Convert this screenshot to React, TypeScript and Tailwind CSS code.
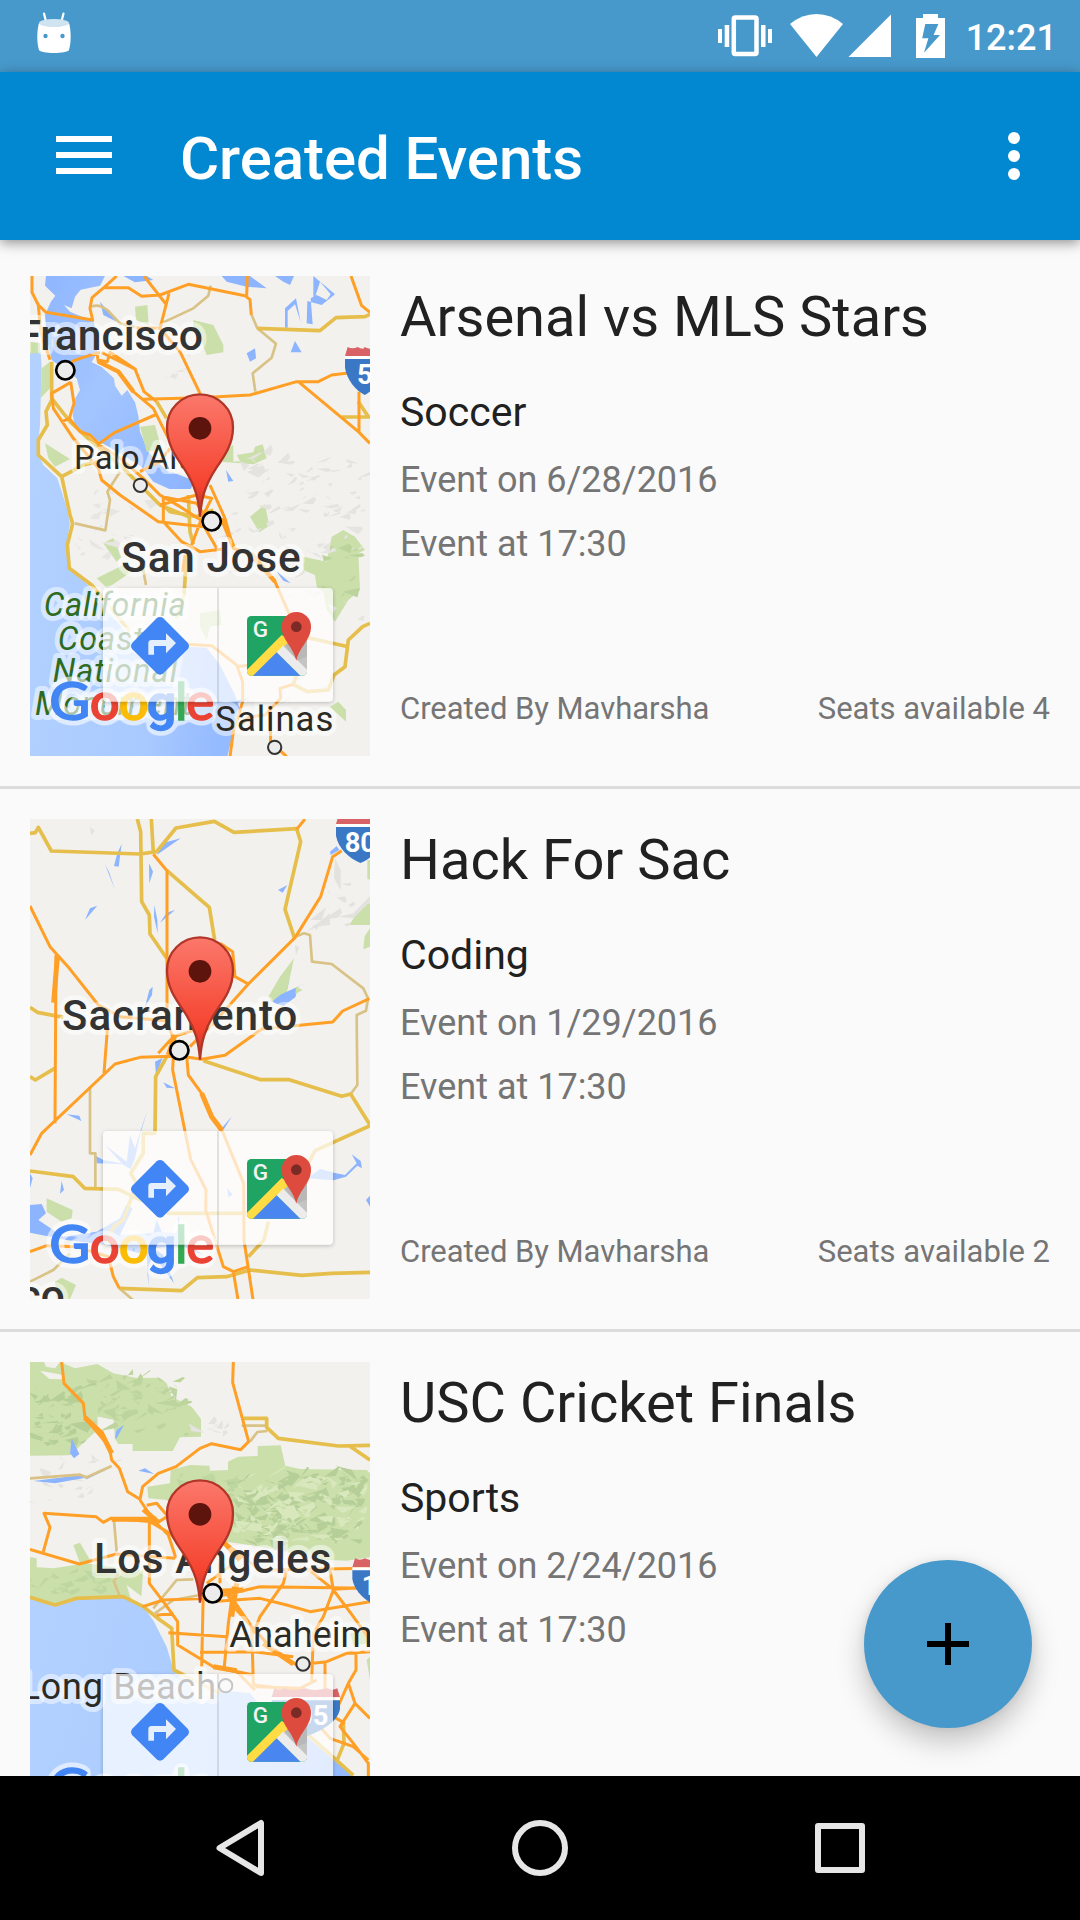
import React from "react";

const LAND = "#f2f1ed";
const WATER = "#8cb4ff";
const PARK = "#cbdfab";
const ORANGE = "#ff9f26";
const YELLOW = "#e6be4b";
const TAN = "#d8c285";

function Roads({ d, color = ORANGE, w = 9 }: { d: string; color?: string; w?: number }) {
  return <path d={d} fill="none" stroke={color} strokeWidth={w} strokeLinejoin="round" />;
}

/* Small faceted shapes of varied size that suggest terrain relief inside a box. */
function Relief({ seed, n, x, y, w, h, color, size = 26 }: { seed: number; n: number; x: number; y: number; w: number; h: number; color: string; size?: number }) {
  let s = seed * 7919;
  const rnd = () => {
    s = (s * 16807) % 2147483647;
    return s / 2147483647;
  };
  let d = "";
  for (let i = 0; i < n; i++) {
    const px = x + rnd() * w;
    const py = y + rnd() * h;
    const k = size * (0.5 + rnd() * 0.9);
    const flip = rnd() > 0.3 ? 1 : -1;
    d += `M${px.toFixed(0)} ${py.toFixed(0)}l${(flip * k * (0.5 + rnd())).toFixed(0)} ${(-k * rnd()).toFixed(0)}l${(k * 0.3 * rnd()).toFixed(0)} ${(k * 0.5 * rnd()).toFixed(0)}l${(-flip * k * 0.9 * rnd()).toFixed(0)} ${(k * 0.6 * rnd()).toFixed(0)}z`;
  }
  return <path d={d} fill={color} />;
}

function Label({ x, y, size, children, weight = 400, color = "#2b2a24", end, italic, len }: { x: number; y: number; size: number; children: string; weight?: number; color?: string; end?: boolean; italic?: boolean; len?: number }) {
  return (
    <text
      x={x}
      y={y}
      fontSize={size}
      fontWeight={weight}
      fill={color}
      stroke="#fff"
      strokeOpacity={0.5}
      strokeWidth={30}
      strokeLinejoin="round"
      paintOrder="stroke"
      textAnchor={end ? "end" : "start"}
      fontStyle={italic ? "italic" : "normal"}
      textLength={len}
    >
      {children}
    </text>
  );
}

function Town({ x, y, big }: { x: number; y: number; big?: boolean }) {
  return <circle cx={x} cy={y} r={big ? 27.5 : 20} fill="#ececec" stroke={big ? "#000" : "#333"} strokeWidth={big ? 8 : 6} />;
}

function Shield({ x, y, label, w = 150, lx }: { x: number; y: number; label: string; w?: number; lx: number }) {
  return (
    <g transform={`translate(${x} ${y})`}>
      <path d={`M8 0q14 8 30 0q18 10 ${w / 2 - 38} 0q20 10 ${w / 2 - 38} 0q16 8 30 0L${w} 27H0z`} fill="#d96266" />
      <path d={`M0 27H${w}V36H0z`} fill="#fff" />
      <path d={`M0 36H${w}V62C${w - 6} 100 ${w * 0.72} 130 ${w / 2} 144C${w * 0.28} 130 6 100 0 62z`} fill="#3a78c6" />
      <text x={lx} y={110} fontSize={82} fontWeight={700} fill="#fff">
        {label}
      </text>
    </g>
  );
}

function MapOne() {
  return (
    <>
      <path d="M30 265L62 262L65 310L60 480L52 560L70 600L112 640L138 720L150 775L140 835L145 905L210 965L262 1035L325 1110L400 1160L490 1145L560 1148L600 1200L645 1290L662 1340L640 1400L622 1475H30z" fill="url(#ocean)" />
      <path d="M78 33H255L240 62L182 74L165 95L155 130L132 120L150 140L222 170L232 262L215 292L245 306L282 340L285 362L305 392L322 375L345 412L355 452L360 500L385 560L410 590L440 615L525 648L512 672L448 672L400 650L365 605L300 565L230 525L190 505L165 485L158 450L166 400L180 376L170 340L95 285L80 220L75 150L92 112L106 92L75 62z" fill="url(#bay)" />
      <path d="M310 33H380L400 45L345 52zM605 33H690L740 70L680 65L620 50zM765 33H822L810 60L790 50zM880 33L945 88L905 120L862 108L860 175L878 178L872 100L890 90L920 105L932 88L900 50L880 112M795 188V130L828 100L842 172L825 118L803 138V188zM680 265L705 250L708 280L690 290zM825 228L845 262L812 262zM618 615L640 648L625 650zM240 110L290 170L250 150z" fill={WATER} />
      <path d="M345 125L382 120L386 180L348 165zM520 165L580 180L610 240V262L560 270L545 230L520 200zM75 535L150 582L105 605L85 580zM65 310L90 290V370L62 400zM620 552L640 540V590L660 588L650 570L700 562L705 545L728 538L740 580L700 598L660 595L600 590zM360 485L405 480L425 555L380 560zM30 230L60 235V265H30zM690 755L735 718L748 782L718 802z" fill={PARK} />
      <g transform="translate(0 735)">
        <path d="M250 100L280 84L305 140L290 155zM230 205L310 165L328 190L262 235zM850 140L920 155L935 80L970 60L1005 80L1035 120L1015 130L1020 240L985 270L945 335L920 300L910 245L890 230L885 195L850 180zM540 310L600 300L605 345L570 350L560 390L540 350zM930 590L955 575L978 600V635z" fill={PARK} />
        <path d="M768 182L812 220L790 212zM640 572L690 565L650 580z" fill={WATER} />
      </g>
      <Relief seed={77} n={55} x={650} y={560} w={370} h={200} color="#e4e3df" />
      <Relief seed={19} n={38} x={560} y={740} w={460} h={200} color="#e5e4e1" />
      <Relief seed={31} n={22} x={170} y={690} w={220} h={200} color="#e7e6e2" />
      <Relief seed={5} n={12} x={400} y={230} w={130} h={140} color="#e6e5e1" size={18} />
      <Relief seed={8} n={20} x={680} y={960} w={340} h={400} color="#e6e5e1" />
      <Relief seed={12} n={12} x={925} y={830} w={70} h={190} color="#bcd39c" />

      <Roads color={TAN} w={8} d="M215 125Q235 115 262 135L300 175L360 190M430 172L520 130L565 92L572 62M695 150L712 190L768 236L755 278L698 325L706 380M300 620L262 680L270 705L256 796L165 775M365 890L378 960" />
      <Roads color={YELLOW} w={11} d="M95 290V400L150 470L215 530L300 600L360 660L420 720L505 755M95 405L78 440L82 480L55 525V570L125 635L150 750L158 775L142 840L148 910L215 960L330 1100M125 635L190 600L230 590M410 410L440 460M712 190L900 197L948 158L1035 155L1050 148M965 456H1050M1015 410L1045 455M505 690L510 800L520 838M500 870L492 990L470 1060M1050 1075L1028 1085L985 1125L975 1205L942 1230L925 1275L862 1280L820 1258L840 1200M985 1145L850 1115M425 715L450 740L530 755L580 735" />
      <Roads
        d="M36 33V82L55 120L62 200L90 284M55 120L78 142L218 165L210 130L216 98L255 65L290 33M255 68H325L365 94L420 90L505 58L675 92L690 104L694 150M372 33L440 120M447 85L420 190L350 190M682 33L680 92M993 33L1025 122L1050 142M420 190L480 260L540 385M230 260L235 290L295 320L340 380L400 430L445 520M232 285L262 290L270 262L345 312L372 380L410 410M245 262L350 315M370 403L540 398L690 390L830 350H895L935 330L985 324M835 350L1015 500L1050 535M1017 380V500M405 450L285 502L232 540M155 290L180 280L240 262M152 350L162 415L148 460L180 500L210 510L245 545L300 580L370 640L420 690L480 725L550 770M152 352L95 385L100 430L160 520L235 610L245 645L300 690L415 770L590 790M125 470L150 460M430 700V770L485 830L540 860L610 852M425 695L530 715L560 760M420 720L530 690L575 700L545 760L515 840M570 660L615 760L640 850L700 870L765 950L800 1030L815 1060M450 550L420 590L360 620M495 870L488 920M550 780L590 850"
      />
      <Roads w={13} d="M235 290L295 320L340 380M605 760L640 845M690 865L765 950" />
      <Roads w={9} d="M500 1138L575 1142L650 1200L668 1250V1310L640 1400L630 1475M650 1205L690 1200M820 1258L780 1270L782 1300L735 1350L690 1355L655 1385M750 1330L752 1430L800 1475" />

      <Label x={549} y={255} size={128} weight={500} color="#333" end>San Francisco</Label>
      <Label x={162} y={613} size={99} len={398}>Palo Alto</Label>
      <Label x={304} y={920} size={127} weight={500} color="#333" len={538}>San Jose</Label>
      <Label x={71} y={1053} size={98} color="#2e6b1e" italic len={426}>California</Label>
      <Label x={113} y={1154} size={98} color="#2e6b1e" italic len={338}>Coastal</Label>
      <Label x={98} y={1252} size={98} color="#2e6b1e" italic len={374}>National</Label>
      <Label x={45} y={1351} size={98} color="#2e6b1e" italic len={470}>Monument</Label>
      <Label x={586} y={1398} size={104} len={354}>Salinas</Label>
      <Town x={136} y={316} big />
      <Town x={361} y={661} />
      <Town x={575} y={769} big />
      <Town x={764} y={1447} />
      <Shield x={975} y={246} label="5" w={118} lx={36} />
    </>
  );
}

function MapTwo() {
  return (
    <>
      <path d="M282 168L292 130L305 102L296 170zM255 162L268 188L285 240zM387 160L399 185L388 220zM410 135L432 98L482 85zM195 330L210 295L232 287zM403 285L412 330L413 370L402 320zM420 338L440 308L465 300zM375 590L388 540L398 530L396 555zM774 240L802 225L788 248zM930 125L950 108L958 120L932 135zM750 570L780 555L800 500L808 510L800 545L830 532L872 516L835 530L826 562L790 588L762 578z" fill={WATER} />
      <path d="M745 560L780 500L822 445L808 510L800 545L780 555L755 575zM828 530L848 540L826 552zM988 345L1030 280H1050V345zM1030 418L1034 378L1050 355V410zM1042 150H1050V208H1042z" fill={PARK} />
      <g transform="translate(0 735)">
        <path d="M30 450L65 447L78 475L55 495L130 545L230 530L300 490L318 450L338 460L300 540L400 535L410 495L425 530L470 535L475 480L490 560L550 600L480 570L400 580L430 600L462 685L400 600L385 635V695L380 600L260 570L140 555L30 533zM255 270L320 320L330 240L345 280L382 165L360 240L345 310L332 342L310 330zM405 20L428 8L408 60zM430 82L465 100L440 98zM140 178L178 182L184 198zM605 220L636 184L610 225zM125 378L132 405L120 416zM30 355L38 370L30 400zM228 303L250 315L320 328L230 325zM622 400L638 420L625 425zM862 370L900 342L948 355L975 360L1010 325L995 298L1022 318L1026 340L1012 332L978 365L940 376zM1038 435L1050 422V455z" fill={WATER} />
        <path d="M80 430L158 465L155 490L125 500L80 470zM105 680L125 668L168 690L150 732H110z" fill={PARK} />
      </g>
      <path d="M870 330L918 292L905 330zM955 320L1000 310L1050 258V275L1000 325zM945 145L962 180V240L942 205zM860 365L930 310V345L890 350zM210 50L224 62L214 76zM825 405L838 412L828 435z" fill="#e3e2de" />
      <Relief seed={91} n={8} x={870} y={220} w={160} h={130} color="#e3e2de" />
      <Roads color={TAN} w={8} d="M825 380L852 370L870 375L876 455L935 462L1030 535L1044 565L1038 602L1010 615L1012 825L992 852M210 830V1030H226V1135M30 1415L100 1380L150 1330M298 1435L345 1475" />
      <Roads color={YELLOW} w={11} d="M30 70L46 68L55 52L94 123L360 132L410 125L468 54L583 34L642 67L830 56L842 95L795 298L823 383M352 27L362 65L365 275L388 315L390 372L440 445M394 27L400 128M441 182L568 292L584 390M30 592L52 607L130 622M30 800L46 810L104 775M440 740L407 800L405 970H370V1030L332 1090L350 1120L310 1230L280 1250L262 1300M550 752L722 809H808L965 859L992 852L1050 945M1050 947L885 1022L865 1060M30 1083L160 1100L194 1135L295 1138L365 1172M440 1210H680M745 1235L732 1290L685 1340M298 1435L485 1442L532 1403L620 1400L690 1380L845 1396L935 1390L1050 1387" />
      <Roads d="M855 27L830 58M30 288L90 410L148 475L235 585L300 620L435 632M108 435L105 940M400 133L441 182V630L458 680M600 400L638 425L645 500L685 522L825 383L902 260L938 140L965 122M685 522L580 640L510 710M1048 566L968 603L938 636L725 657L615 736L545 748L480 738L360 742L285 762L65 970L30 1035M262 660L252 790M415 730L460 680L560 650M460 740L458 780L512 1048L558 1140L557 1200L610 1370L640 1385L655 1475M500 738L505 795L545 850L575 920L610 970L671 1120L672 1290L700 1475M640 1385L685 1370M30 1325L80 1307L165 1310L265 1340L280 1400L298 1435" />
      <Roads w={15} d="M112 440L101 578M545 850L575 920L605 960M445 735L465 675" />
      <Label x={126} y={660} size={127} weight={500} color="#333" len={706}>Sacramento</Label>
      <Label x={134} y={1500} size={127} weight={500} color="#333" end>San Francisco</Label>
      <Town x={478} y={721} big />
      <Shield x={948} y={15} label="80" w={146} lx={26} />
    </>
  );
}

function MapThree() {
  return (
    <>
      <path d="M30 36H72L78 50L105 55L120 36L165 55L232 42L280 70L350 84L418 83L440 100L455 140L515 170L543 207V260L480 262L458 303H338V282H295L282 262L280 210L235 200L232 240L150 316L30 317z" fill={PARK} />
      <path d="M60 62L130 75V88L88 87zM232 200L280 210L285 262L265 280L235 240z" fill={LAND} />
      <path d="M382 410L450 400L452 360L510 345L568 347L570 362L624 360V335L655 320L713 318V288L782 286L796 347L840 357L1040 360L1050 370V622L980 632L880 628L780 600L720 590L620 575L500 500L440 450L385 445zM160 585L180 578L210 630L180 640zM30 622L50 625V660H30z" fill={PARK} />
      <path d="M30 650L100 655L200 640L300 655L370 660L362 765L310 750L170 742L120 775L30 745z" fill={PARK} />
      <Relief seed={44} n={50} x={35} y={110} w={140} h={170} color="#b6cf96" size={30} />
      <Relief seed={62} n={52} x={210} y={90} w={290} h={160} color="#bdd59d" size={32} />
      <Relief seed={23} n={110} x={660} y={380} w={360} h={200} color="#b6cf98" size={42} />
      <Relief seed={64} n={70} x={650} y={380} w={370} h={200} color="#d8e8bc" size={34} />
      <Relief seed={12} n={25} x={470} y={375} w={170} h={80} color="#bed69f" />
      <Relief seed={81} n={20} x={40} y={670} w={270} h={60} color="#bed69f" size={34} />
      <Relief seed={4} n={18} x={45} y={330} w={240} h={140} color="#e4e3df" />
      <Relief seed={3} n={8} x={540} y={220} w={80} h={30} color="#e4e3df" />
      <path d="M155 265L178 312L162 325L150 310zM285 260L290 240L312 224L288 268zM355 362L375 355L402 372zM40 393L180 376L200 388L278 350L205 382L105 400z" fill={WATER} />
      <path d="M30 742L105 770L170 745L305 742L372 772L402 815L440 890L462 965L500 990L545 1065L600 1020L690 1030L760 1110L860 1160L1000 1280V1476H30z" fill="url(#ocean)" />
      <path d="M320 705L372 745V768L335 755z" fill={LAND} />
      <path d="M990 850L1050 840V880L1000 885zM1040 930L1050 920V990z" fill={PARK} />
      <Roads color={TAN} w={8} d="M30 385L180 374L200 382L275 348M282 512L290 605M690 275L712 246L742 243M665 227H740M400 775L470 690L520 688M405 790L460 750L540 735M280 690L300 740M300 660L285 690" />
      <Roads color={YELLOW} w={11} d="M672 205H740V232L775 265L955 288L1050 286M992 290L1050 330M30 742L105 765L170 745L310 740L370 770L420 810L455 835L462 960L540 1000L600 1030M860 1150L1000 1276M970 1120L972 1180L950 1235" />
      <Roads d="M125 36L132 100L190 160L195 203L268 290L275 330L298 355L323 425L360 448L368 410L415 370L468 350L540 295L575 281L662 299L686 275L638 98L640 36M360 450L400 510L445 555L468 625M380 466L410 460L440 495M70 605L90 532L72 490L228 500L250 517L272 505L415 517L440 500M30 598L178 642L290 612L465 625M388 515V700L430 755L473 815V885L580 950L700 975M390 515L450 550L530 640M368 770L430 750L570 745L720 710L1050 715M410 796L460 790M445 848L620 860M550 720L545 950M610 575L720 660L1050 655M600 640V700M560 700L640 640M640 710L625 820L612 960M570 755L720 745L800 765L870 785L1050 755M640 750L695 830L700 1000L710 1010L840 1015L890 990M800 660L790 700L720 800L700 850M930 660L940 720L910 800L880 850L875 995M940 720L1000 800L1050 870M620 730L650 780L750 890L830 945L920 935L980 910L1050 905M540 907L700 905L820 920M915 935V1030L700 1005M1008 910V960L985 1000L940 1100L975 1120M985 1000L1005 1060L1050 1105M1005 1060L960 1130L1000 1180L1045 1240V1280M900 1130L930 1165L1000 1190L1045 1230M580 950L650 965L705 1020M860 655L940 718L1050 712" />
      <Roads w={15} d="M195 203L245 250L275 310M275 508H410M370 478L415 517M610 575L660 630M580 950L650 962M730 880L820 942M570 725L670 720M650 700L635 800" />
      <Label x={222} y={668} size={127} weight={500} color="#333" len={712}>Los Angeles</Label>
      <g transform="translate(0 645)">
        <Label x={628} y={247} size={110} len={430}>Anaheim</Label>
        <Label x={2} y={402} size={108} len={586}>Long Beach</Label>
        <Town x={578} y={85} big />
        <Town x={849} y={297} />
        <Town x={617} y={362} />
        <Shield x={997} y={-20} label="10" w={150} lx={28} />
        <Shield x={755} y={370} label="405" w={205} lx={29} />
      </g>
    </>
  );
}

const wordmark: [string, number, number, string][] = [
  ["G", 58, 123, "#4285f4"],
  ["o", 179, 90, "#ea4335"],
  ["o", 266, 90, "#fbbc05"],
  ["g", 351, 88, "#4285f4"],
  ["l", 436, 36, "#34a853"],
  ["e", 469, 84, "#ea4335"],
];

/* Wordmark, toolbar and pin shared by every map. */
function MapOverlay() {
  return (
    <>
      <g fontFamily="Lato, Roboto, sans-serif" fontSize={154} fontWeight={500} filter="url(#halo)">
        {wordmark.map(([c, x, w, color], i) => (
          <text
            key={i}
            x={x}
            y={1333}
            textLength={w}
            lengthAdjust="spacingAndGlyphs"
            fontFamily={c === "g" ? "Roboto, sans-serif" : undefined}
            fontSize={c === "g" ? 146 : undefined}
            fill={color}
            stroke={color}
            strokeWidth={4}
          >
            {c}
          </text>
        ))}
      </g>
      <g transform="translate(-30 702)">
        <rect x="249" y="238" width="690" height="341" rx="12" fill="#000" opacity="0.22" filter="url(#soft)" clipPath="url(#outside)" />
        <rect x="249" y="234" width="690" height="341" rx="12" fill="#fff" fillOpacity="0.72" />
        <rect x="591" y="234" width="6" height="341" fill="#000" fillOpacity="0.1" />
        <path d="M410 325Q420 317 430 325L503 398Q511 408 503 418L430 490Q420 498 410 490L337 418Q329 408 337 398z" fill="#4285f4" />
        <path d="M385 434V400Q385 390 395 390H438V370L468 399L438 430V408H402V434z" fill="#fff" fillOpacity="0.87" />
        <clipPath id="tile">
          <rect x="681" y="318" width="180" height="179" rx="13" />
        </clipPath>
        <g clipPath="url(#tile)">
          <rect x="681" y="318" width="180" height="180" fill="#1fa463" />
          <path d="M861 318L770 409L861 498z" fill="#c4c4c4" />
          <path d="M861 330V440L830 452L790 400z" fill="#b8b8b8" />
          <path d="M681 479L785 375L812 390L770 430L700 500H681z" fill="#ffdc43" />
          <path d="M770 427L842 498H698z" fill="#4a86f0" />
          <path d="M770 427L789 407L861 479V498H842z" fill="#ececec" />
        </g>
        <text x="698" y="381" fontSize="64" fontWeight="500" fill="#f2f2f2" textLength="46" lengthAdjust="spacingAndGlyphs">G</text>
        <path d="M829 452C820 410 785 390 785 350A44 44 0 0 1 873 350C873 390 838 410 829 452z" fill="#dd4b3e" />
        <circle cx="829" cy="350" r="16" fill="#7b2b25" />
      </g>
      <path d="M510 722C506 670 497 630 462 577C436 540 411 505 411 454A99 99 0 0 1 609 454C609 505 584 540 558 577C523 630 514 670 510 722z" fill="url(#pin)" stroke="#b13628" strokeWidth="7" />
      <circle cx="510" cy="457" r="34" fill="#5c140d" />
    </>
  );
}

function MapView({ kind }: { kind: number }) {
  const top = [33, 27, 36][kind];
  return (
    <svg className="h-[480px] w-[340px] shrink-0 overflow-hidden" viewBox="0 0 1020 1440" fontFamily="Roboto, sans-serif">
      <defs>
        <linearGradient id="ocean" x1="0" y1="0.3" x2="1" y2="0.5">
          <stop offset="0" stopColor="#b2d1ff" />
          <stop offset="0.65" stopColor="#a9caff" />
          <stop offset="1" stopColor="#94baff" />
        </linearGradient>
        <linearGradient id="bay" x1="0" y1="0" x2="1" y2="1">
          <stop offset="0" stopColor="#8fb6ff" />
          <stop offset="0.45" stopColor="#a3c5ff" />
          <stop offset="1" stopColor="#8cb4ff" />
        </linearGradient>
        <linearGradient id="pin" x1="0" y1="0" x2="0" y2="1">
          <stop offset="0" stopColor="#fb786b" />
          <stop offset="0.75" stopColor="#f5432f" />
          <stop offset="1" stopColor="#b13628" />
        </linearGradient>
        <filter id="soft" x="-10%" y="-10%" width="120%" height="125%">
          <feGaussianBlur stdDeviation="7" />
        </filter>
        <filter id="halo" x="-10%" y="-20%" width="120%" height="140%" colorInterpolationFilters="sRGB">
          <feGaussianBlur in="SourceAlpha" stdDeviation="11" result="spread" />
          <feComponentTransfer in="spread" result="edge">
            <feFuncA type="linear" slope="18" intercept="-0.9" />
          </feComponentTransfer>
          <feFlood floodColor="#fff" floodOpacity="0.6" />
          <feComposite in2="edge" operator="in" result="glow" />
          <feMerge>
            <feMergeNode in="glow" />
            <feMergeNode in="SourceGraphic" />
          </feMerge>
        </filter>
        <clipPath id="outside">
          <path clipRule="evenodd" d="M200 200H990V620H200zM261 234H927Q939 234 939 246V563Q939 575 927 575H261Q249 575 249 563V246Q249 234 261 234z" />
        </clipPath>
      </defs>
      <rect width="1020" height="1440" fill={LAND} />
      <g transform={`translate(-30 ${-top})`}>{kind === 0 ? <MapOne /> : kind === 1 ? <MapTwo /> : <MapThree />}</g>
      <MapOverlay />
    </svg>
  );
}

const events = [
  { title: "Arsenal vs MLS Stars", type: "Soccer", date: "6/28/2016", seats: 4 },
  { title: "Hack For Sac", type: "Coding", date: "1/29/2016", seats: 2 },
  { title: "USC Cricket Finals", type: "Sports", date: "2/24/2016", seats: 5 },
];

function StatusBar() {
  return (
    <div className="flex h-[72px] shrink-0 items-center bg-[#4799cb] text-white">
      <svg className="ml-[36px] h-[72px] w-[36px]" viewBox="36 0 36 72" fill="#fff">
        <path d="M44 13.500L46 21.500M63.500 13.500L61.500 21.500" stroke="#fff" strokeWidth="2.200" strokeLinecap="round" />
        <path d="M39 23C42 27.500 66 27.500 69 23C71 30 71.500 42 69 50C67 54 41 54 39 50C36.500 42 37 30 39 23z" />
        <ellipse cx="54" cy="23" rx="15" ry="4" fill="#cfe3f1" />
        <circle cx="45.500" cy="36" r="2.200" fill="#4799cb" />
        <circle cx="62.500" cy="36" r="2.200" fill="#4799cb" />
      </svg>
      <svg className="ml-auto h-[72px] w-[230px]" viewBox="716 0 230 72" fill="#fff">
        <path d="M718 29h4v14h-4zM724.700 25h4.500v22h-4.500zM761 25h4.500v22h-4.500zM768 29h4v14h-4z" />
        <rect x="733.800" y="17.500" width="22.700" height="36.500" rx="1.500" fill="none" stroke="#fff" strokeWidth="4.500" />
        <path d="M816.500 57L790 24Q802 14 816.500 14T843 24z" />
        <path d="M848.500 57H891V14.500z" />
        <path fillRule="evenodd" d="M916 18H923V14H938V18H945V58H916zM925.300 24L922.200 38.300H928.400L924 52.700L940 35H933.600L938.400 24z" />
      </svg>
      <span className="mr-[23px] ml-[20px] text-[36px] leading-[72px] font-medium">
        <span className="relative top-[2px]">12:21</span>
      </span>
    </div>
  );
}

export default function App() {
  return (
    <div className="relative flex h-[1920px] w-[1080px] flex-col overflow-hidden bg-[#fafafa] font-[Roboto,sans-serif]">
      <StatusBar />
      <header className="z-10 flex h-[168px] shrink-0 items-center bg-[#0288d1] text-white shadow-[0_3px_12px_rgba(0,0,0,0.42)]">
        <div className="mb-[2px] ml-[56px] flex w-[56px] flex-col gap-[10px]">
          <div className="h-[6px] bg-white" />
          <div className="h-[6px] bg-white" />
          <div className="h-[6px] bg-white" />
        </div>
        <h1 className="ml-[68px] pt-[6px] text-[60px] leading-[70px] font-medium tracking-[-0.08px]">Created Events</h1>
        <div className="mr-[60px] ml-auto flex flex-col gap-[6px]">
          <div className="size-[12px] rounded-full bg-white" />
          <div className="size-[12px] rounded-full bg-white" />
          <div className="size-[12px] rounded-full bg-white" />
        </div>
      </header>
      <main className="min-h-0 flex-1 overflow-hidden pt-[6px]">
        {events.map((e, i) => (
          <article key={e.title} className="flex h-[543px] gap-[30px] border-b-[3px] border-[#dcdcdc] p-[30px]">
            <MapView kind={i} />
            <div className="flex flex-1 flex-col text-[#757575]">
              <h2 className="mt-[8px] text-[56px] leading-[66px] text-[#212121]">{e.title}</h2>
              <p className="mt-[38px] text-[41px] leading-[48px] text-[#212121]">{e.type}</p>
              <p className="mt-[23px] text-[36px] leading-[42px]">Event on {e.date}</p>
              <p className="mt-[22px] text-[36px] leading-[42px]">Event at 17:30</p>
              <div className="mt-auto mb-[29px] flex justify-between text-[31px] leading-[36px]">
                <span className="tracking-[-0.05px]">Created By Mavharsha</span>
                <span>Seats available {e.seats}</span>
              </div>
            </div>
          </article>
        ))}
      </main>
      <nav className="z-10 flex h-[144px] shrink-0 items-center justify-center bg-black">
        <svg className="h-[60px] w-[660px]" viewBox="210 1818 660 60" fill="none" stroke="#e6e6e6" strokeWidth="6" strokeLinejoin="round">
          <path d="M261 1823V1873L219.500 1848z" />
          <circle cx="540" cy="1848" r="25" />
          <rect x="818" y="1826" width="44" height="44" />
        </svg>
      </nav>
      <button aria-label="Create event" className="absolute top-[1560px] left-[864px] flex size-[168px] items-center justify-center rounded-full bg-[#4799cb] shadow-[0_14px_28px_rgba(0,0,0,0.22),0_0_8px_rgba(0,0,0,0.08)]">
        <svg className="size-[42px]" viewBox="0 0 42 42">
          <path d="M18 0h6v18h18v6H24v18h-6V24H0v-6h18z" />
        </svg>
      </button>
    </div>
  );
}
